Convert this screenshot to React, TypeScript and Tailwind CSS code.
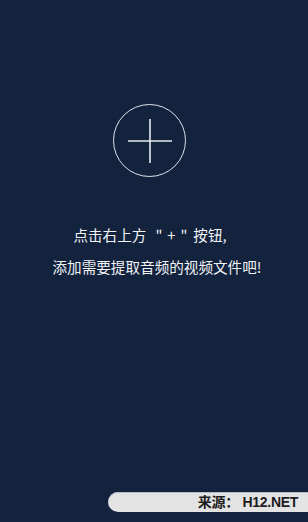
export default function App() {
  return (
    <div className="relative flex h-[522px] w-[308px] flex-col items-center overflow-hidden bg-[#13223d] font-['Noto_Sans_CJK_SC',sans-serif] text-white">
      {/* Add button */}
      <button className="mr-[9px] mt-[104px] flex h-[73px] w-[73px] items-center justify-center rounded-full border-[1.5px] border-[#dfe4ec]">
        <svg width="44" height="44" viewBox="0 0 44 44" fill="none" stroke="#e8ecf2" strokeWidth="1.6">
          <line x1="0" y1="22" x2="44" y2="22" />
          <line x1="22" y1="0" x2="22" y2="44" />
        </svg>
      </button>

      {/* Hint */}
      <div className="mt-[42px] flex flex-col items-center text-[14.6px] leading-[32px] text-[#f2f4f7]">
        <p className="flex pr-[8px]">
          <span>点击右上方</span>
          <span className="ml-[9px] mr-[5px]">"</span>
          <span>+</span>
          <span className="ml-[5px] mr-[6px]">"</span>
          <span>按钮,</span>
        </p>
        <p className="pl-[6px]">添加需要提取音频的视频文件吧!</p>
      </div>

      {/* Watermark */}
      <div className="absolute bottom-[10px] right-0 flex h-[20px] w-[200px] items-center justify-end rounded-l-full bg-[#e3e3e3] pr-[10px] shadow-[inset_0_1px_0_#b8bcc4]">
        <span className="font-['Liberation_Sans','Noto_Sans_CJK_SC',sans-serif] text-[14px] font-bold tracking-[-0.3px] text-[#1c1c1c]">
          来源：&nbsp;H12.NET
        </span>
      </div>
    </div>
  );
}
